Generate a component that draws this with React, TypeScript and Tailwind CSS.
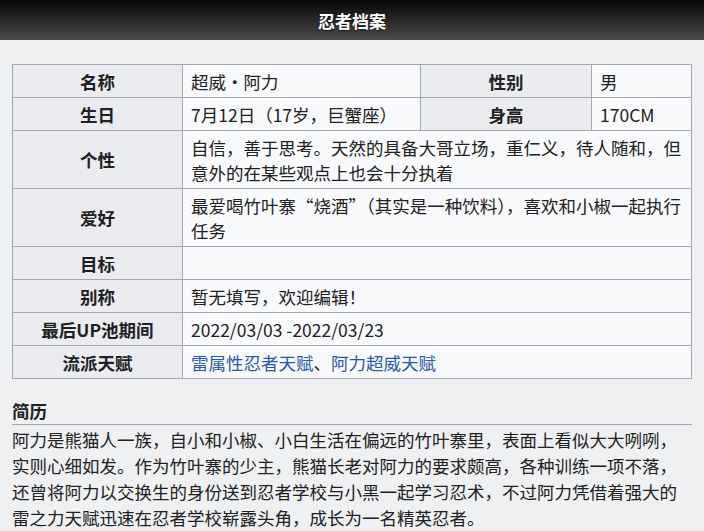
import React from "react";

const font = { fontFamily: '"Noto Sans CJK SC", "Noto Sans", sans-serif' };

function Label({ children }: { children: React.ReactNode }) {
    return (
        <th className="border border-[#a2a9b1] bg-[#eaecf0] px-2 py-[3.5px] text-center font-bold text-[#202122]">
            {children}
        </th>
    );
}

function Value({ children, span }: { children?: React.ReactNode; span?: number }) {
    return (
        <td colSpan={span} className="border border-[#a2a9b1] bg-[#f8f9fa] px-2 py-[3.5px] text-left text-[#202122]">
            {children}
        </td>
    );
}

export default function App() {
    return (
        <div className="min-h-[531px] w-[704px] bg-[#eef0f1] text-[17.5px] leading-[25px]" style={font}>
            <div className="flex h-10 items-center justify-center bg-gradient-to-b from-[#080808] to-[#4c4c4c]">
                <h1 className="text-[17px] font-bold text-white [text-shadow:0_1px_2px_rgba(0,0,0,0.6)]">忍者档案</h1>
            </div>

            <div className="px-3 pt-6">
                <table className="w-full table-fixed border-collapse">
                    <colgroup>
                        <col className="w-[170px]" />
                        <col className="w-[238px]" />
                        <col className="w-[171px]" />
                        <col />
                    </colgroup>
                    <tbody>
                        <tr>
                            <Label>名称</Label>
                            <Value>超威・阿力</Value>
                            <Label>性别</Label>
                            <Value>男</Value>
                        </tr>
                        <tr>
                            <Label>生日</Label>
                            <Value>7月12日（17岁，巨蟹座）</Value>
                            <Label>身高</Label>
                            <Value>170CM</Value>
                        </tr>
                        <tr>
                            <Label>个性</Label>
                            <Value span={3}>自信，善于思考。天然的具备大哥立场，重仁义，待人随和，但意外的在某些观点上也会十分执着</Value>
                        </tr>
                        <tr>
                            <Label>爱好</Label>
                            <Value span={3}>最爱喝竹叶寨“烧酒”（其实是一种饮料），喜欢和小椒一起执行任务</Value>
                        </tr>
                        <tr>
                            <Label>目标</Label>
                            <Value span={3}>&nbsp;</Value>
                        </tr>
                        <tr>
                            <Label>别称</Label>
                            <Value span={3}>暂无填写，欢迎编辑！</Value>
                        </tr>
                        <tr>
                            <Label>最后UP池期间</Label>
                            <Value span={3}>2022/03/03 -2022/03/23</Value>
                        </tr>
                        <tr>
                            <Label>流派天赋</Label>
                            <Value span={3}>
                                <a className="text-[#2b58a8]">雷属性忍者天赋</a>、<a className="text-[#2b58a8]">阿力超威天赋</a>
                            </Value>
                        </tr>
                    </tbody>
                </table>

                <h2 className="mt-[19px] border-b border-[#a2a9b1] pb-[1px] font-bold text-[#202122]">简历</h2>
                <p className="pt-[2px] leading-[26px] text-[#202122]">
                    阿力是熊猫人一族，自小和小椒、小白生活在偏远的竹叶寨里，表面上看似大大咧咧，实则心细如发。作为竹叶寨的少主，熊猫长老对阿力的要求颇高，各种训练一项不落，还曾将阿力以交换生的身份送到忍者学校与小黑一起学习忍术，不过阿力凭借着强大的雷之力天赋迅速在忍者学校崭露头角，成长为一名精英忍者。
                </p>
            </div>
        </div>
    );
}
